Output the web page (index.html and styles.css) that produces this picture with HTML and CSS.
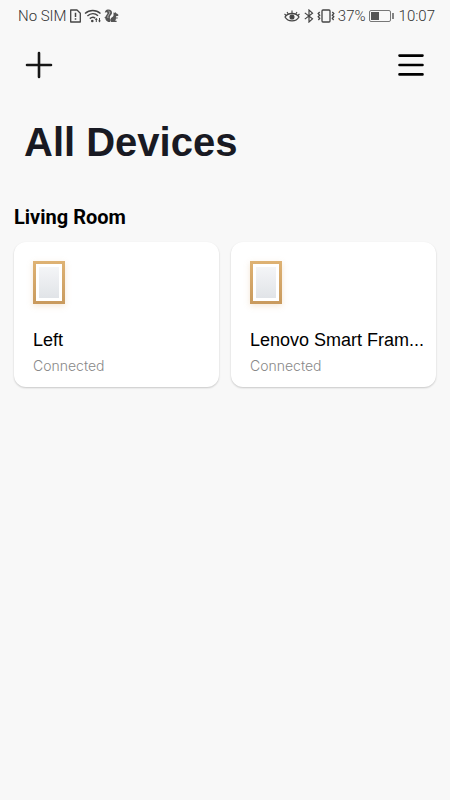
FILE: index.html
```
<!DOCTYPE html>
<html lang="en">
<head>
  <meta charset="UTF-8">
  <meta name="viewport" content="width=device-width, initial-scale=1.0">
  <title>All Devices</title>
  <link rel="stylesheet" href="styles.css">
</head>
<body>
  <!-- Status bar -->
  <div class="status-bar">
    <div class="status-group">
      <span>No SIM</span>
      <svg width="13" height="14" viewBox="0 0 13 14" fill="none" stroke="#444" stroke-width="1.3">
        <path d="M1.700 1h6.300l3.300 3.300V13H1.700z" stroke-linejoin="round"/>
        <path d="M6.500 3.800v4.200M6.500 9.300v1.500" stroke-width="1.500"/>
      </svg>
      <svg width="18" height="14" viewBox="0 0 18 14" fill="none" stroke="#444" stroke-width="1.4">
        <path d="M1 4.500C5.500.400 12 .400 16.500 4.500"/>
        <path d="M3.400 7C6.700 4 11 4 14 6.700"/>
        <path d="M5.800 9.600c2-1.700 4-1.700 5.400-.4"/>
        <circle cx="8.300" cy="12" r="1.300" fill="#444" stroke="none"/>
        <path d="M12.300 13V9.500M15.500 9v3.500" stroke-width="1"/>
        <path d="M10.900 11l1.400-2 1.400 2zM14.100 11.400l1.400 2 1.400-2z" fill="#444" stroke="none"/>
      </svg>
      <!-- Squirrel -->
      <svg width="15" height="14" viewBox="0 0 15 14" fill="#555">
        <path d="M3.800.6C6.500.3 8.400 2 8 4.200 7.700 5.900 6 6.500 5.800 8c-.1 1.100.1 2 .8 2.900l-.5 2H4.300C2.500 12.200 1.500 11 1.300 9.300L.2 8.800l1.200-.7c.2-1.500 1.500-2.300 2-3.500C3.700 3.700 3 3.200 2 3.300L.8 3.700C1 2 2.100.8 3.800.6z"/>
        <path d="M9.700 3.200l1 .9.700-1 .7 1.200c1.200.2 2 .9 2.400 2-.5.700-1.300.9-2.300.9-.3.400-.3.800-.2 1.200l1.800.1-.2.900-1.700.1c.1 1-.2 1.700-.8 2.300h1.500v1.100H7.200c-.7-.8-.9-1.700-.7-2.700C6.800 8.500 9.300 8.200 9.600 6.300 9.400 5.300 9.400 4.200 9.700 3.200z"/>
        <path d="M4.500 2c1.600.7 1.500 2 .6 3.200C4.200 6.400 3.500 7.300 4 9" fill="none" stroke="#f8f8f8" stroke-width=".6"/>
      </svg>
    </div>
    <div class="status-group status-right">
      <svg width="17" height="14" viewBox="0 0 17 14" fill="none" stroke="#444" stroke-width="1.300">
        <path d="M1 8C4 3.300 12 3.300 15 8 12 13.200 4 13.200 1 8z"/>
        <circle cx="8" cy="8" r="1.900" fill="#444"/>
        <path d="M8 4.200V1.500M4.300 5L3 3M11.700 5L13 3M2.200 6.500L.5 5M13.800 6.500L15.500 5" stroke-width="1.100"/>
      </svg>
      <svg width="10" height="14" viewBox="0 0 10 14" fill="none" stroke="#444" stroke-width="1.200">
        <path d="M.8 3.900l7.700 6L5 13V1l3.500 3.100-7.700 6"/>
      </svg>
      <svg width="18" height="14" viewBox="0 0 18 14" fill="none" stroke="#444" stroke-width="1.300">
        <rect x="5" y="1" width="8" height="12" rx="1"/>
        <path d="M2.700 3L1.200 4.600l1.500 1.600-1.500 1.600 1.500 1.600L1.400 11M15.300 3l1.500 1.600-1.500 1.600 1.500 1.600-1.500 1.600 1.300 1.600"/>
      </svg>
      <span>37%</span>
      <svg class="battery" width="25" height="12" viewBox="0 0 25 12" fill="none" stroke="#777">
        <rect x=".5" y=".5" width="21" height="11" rx="1.500"/>
        <rect x="2" y="2" width="8" height="8" fill="#555" stroke="none"/>
        <path d="M24 3v6" stroke="#444" stroke-width="1.300"/>
      </svg>
      <span>10:07</span>
    </div>
  </div>

  <!-- Toolbar -->
  <header class="toolbar">
    <button class="icon-button" type="button" aria-label="Add device">
      <svg width="28" height="28" viewBox="0 0 28 28" stroke="#161616" stroke-width="2.600" stroke-linecap="round">
        <path d="M14 2v24M2 14h24"/>
      </svg>
    </button>
    <button class="icon-button" type="button" aria-label="Menu">
      <svg width="28" height="28" viewBox="0 0 28 28" stroke="#000" stroke-width="2.600" stroke-linecap="round">
        <path d="M2.500 4.600h23M2.500 14h23M2.500 23.400h23"/>
      </svg>
    </button>
  </header>

  <main>
    <h1>All Devices</h1>

    <section class="room">
      <h2>Living Room</h2>
      <div class="devices">
        <a class="device" href="#left">
          <span class="frame"><span class="frame-picture"></span></span>
          <span class="device-name">Left</span>
          <span class="device-state">Connected</span>
        </a>
        <a class="device" href="#smart-frame">
          <span class="frame"><span class="frame-picture"></span></span>
          <span class="device-name">Lenovo Smart Fram...</span>
          <span class="device-state">Connected</span>
        </a>
      </div>
    </section>
  </main>
</body>
</html>
```
FILE: styles.css
```
* {
  box-sizing: border-box;
}

body {
  margin: 0;
  min-height: 100vh;
  background: #f8f8f8;
  color: #000;
  font-family: "Liberation Sans", Arial, sans-serif;
}

/* Status bar */
.status-bar {
  display: flex;
  align-items: center;
  justify-content: space-between;
  height: 32px;
  padding: 0 15px 0 18px;
  color: #333;
  font: 300 15px/32px Roboto, sans-serif;
}

.status-group {
  display: flex;
  align-items: center;
  gap: 2px;
}

.status-right {
  gap: 3px;
}

.battery {
  margin-right: 2px;
}

/* Toolbar */
.toolbar {
  display: flex;
  align-items: center;
  justify-content: space-between;
  height: 66px;
  padding: 0 25px;
}

.icon-button {
  display: flex;
  padding: 0;
  border: none;
  background: none;
  cursor: pointer;
}

h1 {
  margin: 20px 24px 0;
  color: #191a23;
  font-size: 40px;
  line-height: 48px;
}

/* Rooms */
.room {
  padding: 38px 14px 0;
}

h2 {
  margin: 0;
  font: bold 20px/26px Roboto, sans-serif;
}

.devices {
  display: grid;
  grid-template-columns: 1fr 1fr;
  gap: 12px;
  margin-top: 12px;
}

.device {
  display: flex;
  flex-direction: column;
  min-width: 0;
  padding: 19px 10px 11px 19px;
  border-radius: 12px;
  background: #fff;
  box-shadow: 0 1px 2px rgba(0, 0, 0, 0.2);
  color: #000;
  text-decoration: none;
}

/* Wooden edge round a white mat */
.frame {
  width: 32px;
  height: 43px;
  padding: 3px;
  border: 3px solid transparent;
  background:
    linear-gradient(#fff, #fff) padding-box,
    linear-gradient(#deb273, #c99a5e) border-box;
  box-shadow: 0 2px 6px rgba(213, 160, 94, 0.25);
}

.frame-picture {
  display: block;
  height: 100%;
  background: linear-gradient(#f4f5f7, #e1e4e8);
}

.device-name {
  margin-top: 24px;
  font-size: 18px;
  line-height: 24px;
  white-space: nowrap;
}

.device-state {
  margin-top: 4px;
  color: #888;
  font: 300 14px/20px Inter, sans-serif;
}
```
